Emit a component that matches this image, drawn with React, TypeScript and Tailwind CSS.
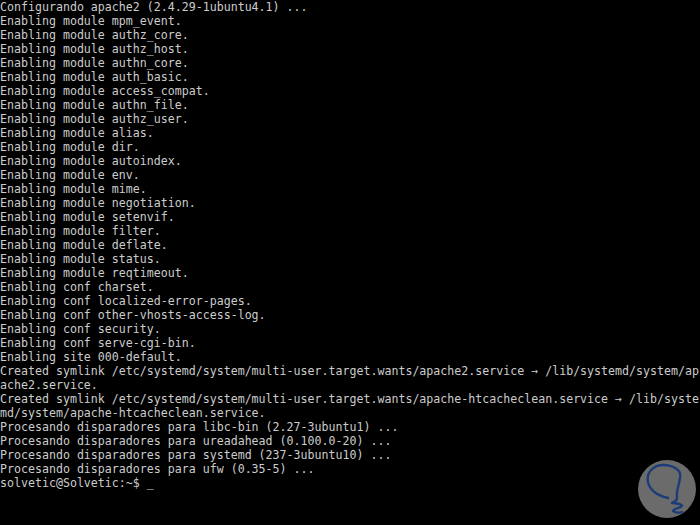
import React from "react";

const lines: string[] = [
  "Configurando apache2 (2.4.29-1ubuntu4.1) ...",
  "Enabling module mpm_event.",
  "Enabling module authz_core.",
  "Enabling module authz_host.",
  "Enabling module authn_core.",
  "Enabling module auth_basic.",
  "Enabling module access_compat.",
  "Enabling module authn_file.",
  "Enabling module authz_user.",
  "Enabling module alias.",
  "Enabling module dir.",
  "Enabling module autoindex.",
  "Enabling module env.",
  "Enabling module mime.",
  "Enabling module negotiation.",
  "Enabling module setenvif.",
  "Enabling module filter.",
  "Enabling module deflate.",
  "Enabling module status.",
  "Enabling module reqtimeout.",
  "Enabling conf charset.",
  "Enabling conf localized-error-pages.",
  "Enabling conf other-vhosts-access-log.",
  "Enabling conf security.",
  "Enabling conf serve-cgi-bin.",
  "Enabling site 000-default.",
  "Created symlink /etc/systemd/system/multi-user.target.wants/apache2.service \u2192 /lib/systemd/system/ap",
  "ache2.service.",
  "Created symlink /etc/systemd/system/multi-user.target.wants/apache-htcacheclean.service \u2192 /lib/syste",
  "md/system/apache-htcacheclean.service.",
  "Procesando disparadores para libc-bin (2.27-3ubuntu1) ...",
  "Procesando disparadores para ureadahead (0.100.0-20) ...",
  "Procesando disparadores para systemd (237-3ubuntu10) ...",
  "Procesando disparadores para ufw (0.35-5) ...",
  "solvetic@Solvetic:~$ _",
];

export default function App() {
  return (
    <div className="relative w-[700px] h-[525px] bg-black overflow-hidden">
      <div
        className="flex flex-col text-[11.62px] leading-[14px] text-[#cccccc] whitespace-pre"
        style={{ fontFamily: '"DejaVu Sans Mono", monospace' }}
      >
        {lines.map((l, i) => (
          <div key={i} className="h-[14px]">
            {l}
          </div>
        ))}
      </div>
      <div className="absolute left-[638px] top-[460px] w-[58px] h-[58px] rounded-full bg-[#6b6b6b]">
        <svg width="58" height="58" viewBox="0 0 58 58" fill="none">
          <path
            d="M30 38 C 22 36, 12 32, 10 22 C 8 12, 16 5, 25 5 C 35 5, 44 10, 42 18 C 41 26, 38 30, 39 38 C 39 41, 36 42, 34 43 C 38 43, 44 44, 44 46 C 42 48, 35 49, 35 51 C 37 53, 42 53, 44 52"
            stroke="#1c3d78"
            strokeWidth="2.4"
            strokeLinecap="round"
            strokeLinejoin="round"
          />
        </svg>
      </div>
    </div>
  );
}
